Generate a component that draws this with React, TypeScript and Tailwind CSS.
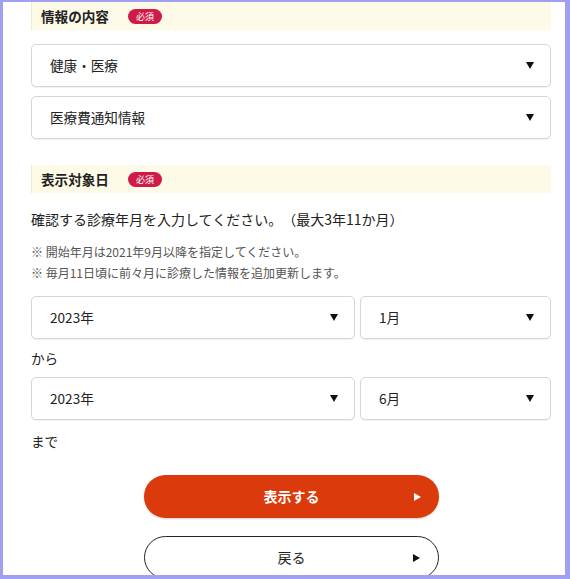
const font = { fontFamily: '"Noto Sans CJK JP", "Noto Sans", sans-serif' };

const Badge = () => (
  <span className="ml-[19px] inline-flex h-[15px] w-[34px] items-center justify-center rounded-full bg-[#cf1b47] text-[9px] leading-none text-white">
    必須
  </span>
);

const SectionHeader = ({ title, className }: { title: string; className?: string }) => (
  <div
    className={
      "flex h-[28px] items-center border-l border-[#f1ead0] bg-[#fefae8] pl-[9px] " +
      (className || "")
    }
  >
    <span className="text-[13.6px] font-bold text-[#222]">{title}</span>
    <Badge />
  </div>
);

const Arrow = () => (
  <svg width="8" height="7" viewBox="0 0 8 7">
    <path d="M0 0 H8 L4 7 Z" fill="#111" />
  </svg>
);

const SelectBox = ({ value, className }: { value: string; className?: string }) => (
  <div
    className={
      "flex h-[43px] items-center justify-between rounded-[5px] border border-[#d6d6d6] bg-white pl-[18px] pr-[16px] shadow-[0_1px_1px_rgba(0,0,0,0.06)] " +
      (className || "")
    }
  >
    <span className="text-[13.6px] text-[#222]">{value}</span>
    <Arrow />
  </div>
);

const Play = ({ color }: { color: string }) => (
  <svg width="7" height="8" viewBox="0 0 7 8" className="absolute right-[18px]">
    <path d="M0 0 L7 4 L0 8 Z" fill={color} />
  </svg>
);

export default function App() {
  return (
    <div
      style={font}
      className="h-[579px] w-[570px] overflow-hidden border-b-[4px] border-l-[3px] border-r-[5px] border-t-[2px] border-[#a0a0f2] bg-white"
    >
      <div className="pl-[28px] pr-[14px]">
        <SectionHeader title="情報の内容" />

        <SelectBox value="健康・医療" className="mt-[14px]" />
        <SelectBox value="医療費通知情報" className="mt-[9px]" />

        <SectionHeader title="表示対象日" className="mt-[26px]" />

        <p className="mt-[16px] text-[14px] leading-[20px] text-[#222] [text-spacing-trim:space-all]">
          確認する診療年月を入力してください。（最大3年11か月）
        </p>
        <p className="mt-[13px] text-[12px] leading-[20px] text-[#555]">
          ※ 開始年月は2021年9月以降を指定してください。
        </p>
        <p className="mt-[1px] text-[12px] leading-[20px] text-[#555]">
          ※ 毎月11日頃に前々月に診療した情報を追加更新します。
        </p>

        <div className="mt-[13px] flex gap-[5px]">
          <SelectBox value="2023年" className="w-[324px]" />
          <SelectBox value="1月" className="flex-1" />
        </div>
        <p className="mt-[9px] text-[13.6px] leading-[20px] text-[#222]">から</p>
        <div className="mt-[9px] flex gap-[5px]">
          <SelectBox value="2023年" className="w-[324px]" />
          <SelectBox value="6月" className="flex-1" />
        </div>
        <p className="mt-[11px] text-[13.6px] leading-[20px] text-[#222]">まで</p>

        <div className="mt-[24px] flex flex-col items-center gap-[18px] pl-[1px]">
          <button className="relative flex h-[43px] w-[295px] items-center justify-center rounded-full bg-[#da3a0c] text-[14px] font-bold text-white shadow-[0_1px_2px_rgba(0,0,0,0.2)]">
            表示する
            <Play color="#fff" />
          </button>
          <button className="relative flex h-[43px] w-[295px] items-center justify-center rounded-full border border-[#222] bg-white text-[14px] text-[#222]">
            戻る
            <Play color="#111" />
          </button>
        </div>
      </div>
    </div>
  );
}
